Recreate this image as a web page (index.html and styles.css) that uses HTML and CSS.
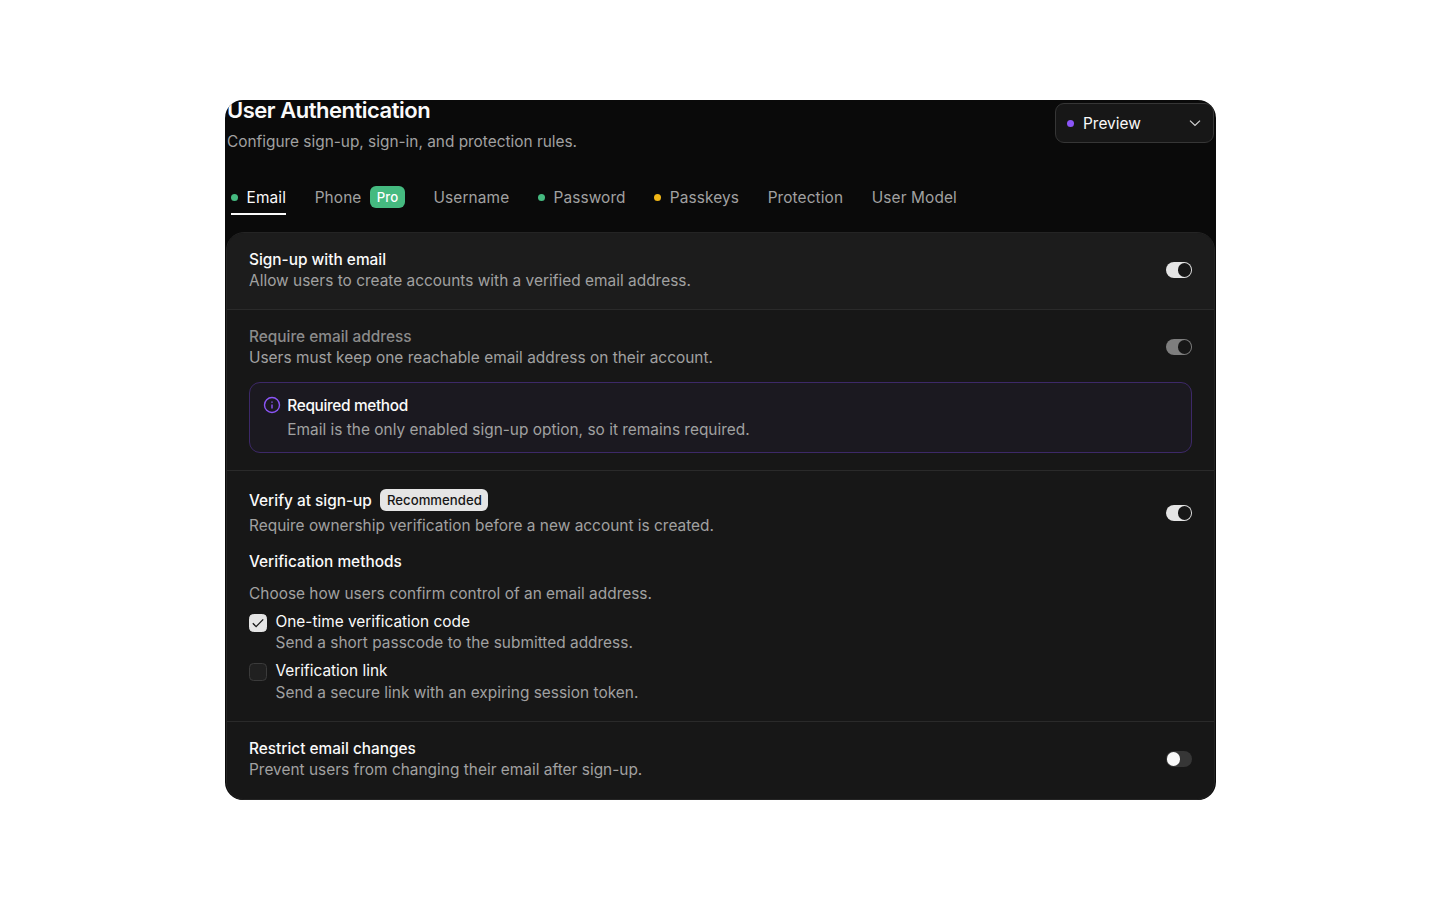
FILE: index.html
```html
<!DOCTYPE html>
<html lang="en">
<head>
    <meta charset="UTF-8">
    <title>User Authentication</title>
    <link rel="stylesheet" href="styles.css">
</head>
<body>
    <main class="panel">
        <header class="header">
            <div>
                <h1>User Authentication</h1>
                <p class="subtitle">Configure sign-up, sign-in, and protection rules.</p>
            </div>
            <button class="env-select">
                <span class="dot purple"></span>
                <span class="env-name">Preview</span>
                <svg class="chevron" viewBox="0 0 12 12"><path d="M1 3.6 6 8.4l5-4.8"/></svg>
            </button>
        </header>

        <nav class="tabs">
            <a class="tab active"><span class="dot green"></span><span class="label">Email</span></a>
            <a class="tab"><span class="label">Phone</span><span class="badge pro">Pro</span></a>
            <a class="tab"><span class="label">Username</span></a>
            <a class="tab"><span class="dot green"></span><span class="label">Password</span></a>
            <a class="tab"><span class="dot yellow"></span><span class="label">Passkeys</span></a>
            <a class="tab"><span class="label">Protection</span></a>
            <a class="tab"><span class="label">User Model</span></a>
        </nav>

        <div class="card">
            <section class="row row-signup">
                <div class="row-head">
                    <div>
                        <h2>Sign-up with email</h2>
                        <p>Allow users to create accounts with a verified email address.</p>
                    </div>
                    <span class="switch on"></span>
                </div>
            </section>

            <section class="row row-require">
                <div class="row-head">
                    <div>
                        <h2 class="muted">Require email address</h2>
                        <p>Users must keep one reachable email address on their account.</p>
                    </div>
                    <span class="switch on disabled"></span>
                </div>
                <div class="notice">
                    <svg class="info" viewBox="0 0 18 18">
                        <circle cx="9" cy="9" r="7.5"/>
                        <path d="M9 8.4v4M9 5.4v1.4"/>
                    </svg>
                    <div>
                        <h3>Required method</h3>
                        <p>Email is the only enabled sign-up option, so it remains required.</p>
                    </div>
                </div>
            </section>

            <section class="row row-verify">
                <div class="row-head">
                    <div>
                        <div class="title-line">
                            <h2>Verify at sign-up</h2>
                            <span class="badge">Recommended</span>
                        </div>
                        <p>Require ownership verification before a new account is created.</p>
                    </div>
                    <span class="switch on"></span>
                </div>
                <h3 class="methods-title">Verification methods</h3>
                <p class="methods-text">Choose how users confirm control of an email address.</p>
                <div class="option">
                    <span class="checkbox checked">
                        <svg viewBox="0 0 16 16"><path d="m2.8 8.2 3.3 3.4 7.1-7.2"/></svg>
                    </span>
                    <div>
                        <h4>One-time verification code</h4>
                        <p>Send a short passcode to the submitted address.</p>
                    </div>
                </div>
                <div class="option">
                    <span class="checkbox"></span>
                    <div>
                        <h4>Verification link</h4>
                        <p>Send a secure link with an expiring session token.</p>
                    </div>
                </div>
            </section>

            <section class="row row-restrict">
                <div class="row-head">
                    <div>
                        <h2>Restrict email changes</h2>
                        <p>Prevent users from changing their email after sign-up.</p>
                    </div>
                    <span class="switch"></span>
                </div>
            </section>
        </div>
    </main>
</body>
</html>
```
FILE: styles.css
```css
:root {
    --bg: #0a0a0a;
    --card-bg: #171717;
    --card-raised: #1c1c1c;
    --border: #2a2a2a;
    --text: #fafafa;
    --text-muted: #a1a1a1;
    --light: #e5e5e5;
    --green: #45ba80;
    --yellow: #f0b616;
    --purple: #8b55f7;
}

* {
    box-sizing: border-box;
    margin: 0;
    padding: 0;
}

body {
    height: 900px;
    padding: 100px 224px 100px 225px;
    background-color: #fff;
    font-family: Inter, sans-serif;
    font-size: 15.4px;
    line-height: 21.5px;
    letter-spacing: 0.02px;
    color: var(--text);
}

.panel {
    height: 700px;
    padding: 0 1px;
    background-color: var(--bg);
    border-radius: 18px;
    overflow: hidden;
}

.header {
    display: flex;
    justify-content: space-between;
    height: 74px;
    padding-left: 1px;
}

h1 {
    font-size: 22px;
    font-weight: 600;
    line-height: 20px;
    letter-spacing: -0.48px;
}

h2, h3, h4 {
    font-size: inherit;
    font-weight: 500;
    letter-spacing: 0;
}

h4 {
    font-weight: 400;
}

p {
    color: var(--text-muted);
}

.subtitle {
    margin-top: 10.8px;
    letter-spacing: 0;
}

.env-select {
    display: flex;
    align-items: center;
    width: 159px;
    height: 40px;
    margin: 3px 1px 0 0;
    padding: 0 12px 0 11px;
    background-color: #171717;
    border: 1px solid #363636;
    border-radius: 9px;
    font: inherit;
    letter-spacing: inherit;
    color: var(--text);
}

.env-name {
    flex: 1;
    margin-left: 9px;
    padding-top: 1px;
    text-align: left;
}

.chevron {
    width: 12px;
    height: 12px;
    fill: none;
    stroke: #d0d0d0;
    stroke-width: 1.3;
}

.dot {
    flex: none;
    width: 7px;
    height: 7px;
    border-radius: 50%;
}

.green {
    background-color: var(--green);
}

.yellow {
    background-color: var(--yellow);
}

.purple {
    background-color: var(--purple);
}

.tabs {
    display: flex;
    gap: 28.6px;
    height: 58px;
    padding: 7px 0 0 5px;
    letter-spacing: 0.12px;
}

.tab {
    display: flex;
    align-items: center;
    gap: 8.6px;
    height: 34px;
    color: var(--text-muted);
    border-bottom: 2px solid transparent;
}

.tab .label {
    padding-top: 1px;
}

.tab.active {
    color: var(--text);
    border-bottom-color: var(--text);
}

.badge {
    height: 22px;
    padding: 0 6.5px;
    background-color: var(--light);
    border-radius: 6px;
    font-size: 13.2px;
    font-weight: 500;
    line-height: 22px;
    letter-spacing: 0;
    color: #171717;
}

.badge.pro {
    padding: 0 6.8px;
    background-color: var(--green);
    color: #fff;
}

.card {
    height: 568px;
    background-color: var(--card-bg);
    border: 1px solid #242424;
    border-radius: 18px;
    overflow: hidden;
}

.row {
    padding: 0 22px;
    border-bottom: 1px solid var(--border);
}

.row-head {
    display: flex;
    justify-content: space-between;
    align-items: center;
}

.row-signup {
    height: 77px;
    padding-top: 15.5px;
    background-color: var(--card-raised);
}

.row-require {
    height: 161px;
    padding-top: 15.5px;
}

.row-verify {
    height: 251px;
    padding-top: 18px;
}

.row-restrict {
    padding-top: 15.5px;
    border-bottom: none;
}

.muted {
    color: #8b8b8b;
}

.switch {
    flex: none;
    display: flex;
    align-items: center;
    width: 26.5px;
    height: 15.5px;
    padding: 0 1px;
    background-color: #363636;
    border-radius: 8px;
}

.switch::before {
    content: "";
    width: 13.5px;
    height: 13.5px;
    background-color: var(--text);
    border-radius: 50%;
}

.switch.on {
    justify-content: flex-end;
    background-color: var(--light);
}

.switch.on::before {
    background-color: #171717;
}

.switch.disabled {
    background-color: #7e7e7e;
}

.notice {
    display: flex;
    gap: 6px;
    height: 71px;
    margin-top: 13.5px;
    padding: 12px 13.3px;
    background-color: #1b1920;
    border: 1px solid #3d2968;
    border-radius: 11px;
}

.notice h3 {
    letter-spacing: -0.35px;
}

.notice p {
    margin-top: 2.7px;
}

.info {
    flex: none;
    width: 18px;
    height: 18px;
    margin-top: 1px;
    fill: none;
    stroke: var(--purple);
    stroke-width: 1.4;
}

.title-line {
    display: flex;
    align-items: center;
    gap: 8.6px;
    height: 22px;
    margin-bottom: 4px;
}

.title-line h2 {
    padding-top: 1.5px;
}

.methods-title {
    margin-top: 14.5px;
}

.methods-text {
    margin-top: 10px;
}

.option {
    display: flex;
    gap: 8.5px;
    margin-top: 6.5px;
}

.checkbox {
    flex: none;
    width: 18px;
    height: 18px;
    margin-top: 3px;
    background-color: #202020;
    border: 1px solid #3b3b3b;
    border-radius: 4.5px;
}

.checkbox.checked {
    background-color: var(--light);
    border-color: var(--light);
}

.checkbox svg {
    display: block;
    width: 16px;
    height: 16px;
    fill: none;
    stroke: #171717;
    stroke-width: 1.3;
}
```
